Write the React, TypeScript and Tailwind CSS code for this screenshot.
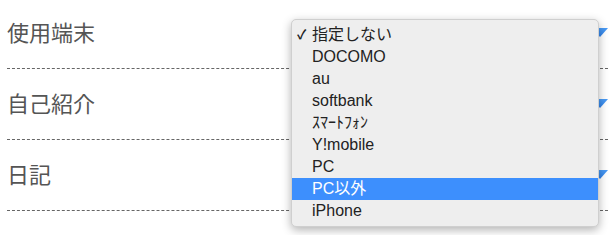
import React from 'react';

const rows = ['使用端末', '自己紹介', '日記'];
const options = ['指定しない', 'DOCOMO', 'au', 'softbank', 'ｽﾏｰﾄﾌｫﾝ', 'Y!mobile', 'PC', 'PC以外', 'iPhone'];

const Arrow: React.FC = () => (
   <svg width="16" height="9" viewBox="0 0 16 9" className="shrink-0 mb-[1px]">
      <defs>
         <linearGradient id="ag" x1="0" y1="0" x2="0" y2="1">
            <stop offset="0" stopColor="#4a9cf6" />
            <stop offset="1" stopColor="#2f80e8" />
         </linearGradient>
      </defs>
      <path d="M0 0 H16 L8 9 Z" fill="url(#ag)" />
   </svg>
);

const App: React.FC = () => {
   return (
      <div className="relative w-[613px] h-[235px] overflow-hidden bg-white">
         <div className="-mt-[2px] pl-[7px] pr-[5px]">
            {rows.map(r => (
               <div key={r} className="h-[71px] flex items-center justify-between border-b border-dashed border-[#666]">
                  <span className="mb-[4px] text-[22px] leading-none text-[#555] [font-family:'Noto_Sans_CJK_JP',sans-serif]">{r}</span>
                  <Arrow />
               </div>
            ))}
         </div>

         <div className="absolute left-[291px] top-[19px] w-[308px] py-[4px] bg-[#eeeeee] rounded-[5px] border border-[#cfcfcf] shadow-[0_3px_10px_rgba(0,0,0,0.3)] [font-family:'Liberation_Sans','Noto_Sans_CJK_JP',sans-serif]">
            {options.map((o, i) => (
               <div
                  key={o}
                  className={`h-[22px] flex items-center text-[16px] ${i === 7 ? 'bg-[#3d8ffd] text-white' : 'text-[#222]'}`}
               >
                  <span className="w-[20px] pl-[5px] text-[13px] font-bold">{i === 0 ? '✓' : ''}</span>
                  <span>{o}</span>
               </div>
            ))}
         </div>
      </div>
   );
};

export default App;
